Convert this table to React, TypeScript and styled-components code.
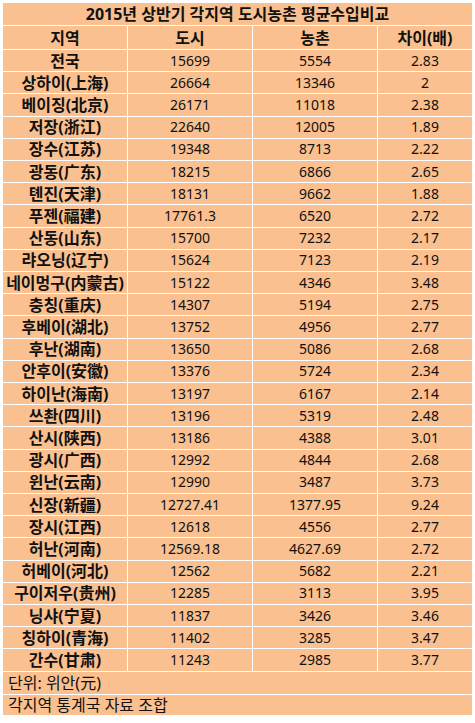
import styled, { createGlobalStyle } from 'styled-components'

type Row = [string, string, string, string]

const rows: Row[] = [
  ['전국', '15699', '5554', '2.83'],
  ['상하이(上海)', '26664', '13346', '2'],
  ['베이징(北京)', '26171', '11018', '2.38'],
  ['저장(浙江)', '22640', '12005', '1.89'],
  ['장수(江苏)', '19348', '8713', '2.22'],
  ['광동(广东)', '18215', '6866', '2.65'],
  ['톈진(天津)', '18131', '9662', '1.88'],
  ['푸젠(福建)', '17761.3', '6520', '2.72'],
  ['산동(山东)', '15700', '7232', '2.17'],
  ['랴오닝(辽宁)', '15624', '7123', '2.19'],
  ['네이멍구(内蒙古)', '15122', '4346', '3.48'],
  ['충칭(重庆)', '14307', '5194', '2.75'],
  ['후베이(湖北)', '13752', '4956', '2.77'],
  ['후난(湖南)', '13650', '5086', '2.68'],
  ['안후이(安徽)', '13376', '5724', '2.34'],
  ['하이난(海南)', '13197', '6167', '2.14'],
  ['쓰촨(四川)', '13196', '5319', '2.48'],
  ['산시(陕西)', '13186', '4388', '3.01'],
  ['광시(广西)', '12992', '4844', '2.68'],
  ['윈난(云南)', '12990', '3487', '3.73'],
  ['신장(新疆)', '12727.41', '1377.95', '9.24'],
  ['장시(江西)', '12618', '4556', '2.77'],
  ['허난(河南)', '12569.18', '4627.69', '2.72'],
  ['허베이(河北)', '12562', '5682', '2.21'],
  ['구이저우(贵州)', '12285', '3113', '3.95'],
  ['닝샤(宁夏)', '11837', '3426', '3.46'],
  ['칭하이(青海)', '11402', '3285', '3.47'],
  ['간수(甘肃)', '11243', '2985', '3.77'],
]

const GlobalStyle = createGlobalStyle`
  body {
    margin: 0;
    background: #fff;
    font-family: "Noto Sans", "Noto Sans CJK KR", "Noto Sans CJK SC", sans-serif;
    color: #111;
  }
`

export default function App() {
  return (
    <>
      <GlobalStyle />
      <Sheet>
        <Title>2015년 상반기 각지역 도시농촌 평균수입비교</Title>
        <HeadCell>지역</HeadCell>
        <HeadCell>도시</HeadCell>
        <HeadCell>농촌</HeadCell>
        <HeadCell>차이(배)</HeadCell>
        {rows.map((r) => (
          <DataRow key={r[0]}>
            <Region>{r[0]}</Region>
            <Num>{r[1]}</Num>
            <Num>{r[2]}</Num>
            <Num>{r[3]}</Num>
          </DataRow>
        ))}
        <Note>단위: 위안(元)</Note>
        <Note>각지역 통계국 자료 조합</Note>
      </Sheet>
    </>
  )
}

const Sheet = styled('div')`
  display: grid;
  grid-template-columns: 124px 124px 124px 94px;
  grid-template-rows: 22px 23px repeat(28, 21.21px) 22px 20px;
  gap: 1px;
  width: 469px;
  margin: 3px 0 0 3px;
  background: #fff;
`

const Cell = styled('div')`
  display: flex;
  align-items: center;
  justify-content: center;
  background: #fac090;
  font-size: 16px;
  line-height: 1;
  white-space: nowrap;
  overflow: hidden;
`

const Title = styled(Cell)`
  grid-column: 1 / -1;
  font-weight: bold;
`

const HeadCell = styled(Cell)`
  font-weight: bold;
`

const DataRow = styled('div')`
  display: contents;
`

const Region = styled(Cell)`
  font-weight: bold;
`

const Num = styled(Cell)`
  font-size: 14px;
  font-weight: normal;
`

const Note = styled(Cell)`
  grid-column: 1 / -1;
  justify-content: flex-start;
  padding-left: 5px;
`
